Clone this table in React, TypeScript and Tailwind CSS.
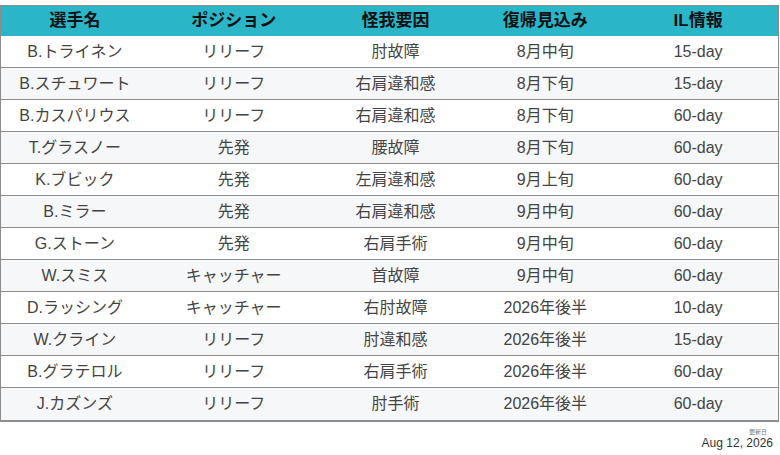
const rows = [
  ["B.トライネン", "リリーフ", "肘故障", "8月中旬", "15-day"],
  ["B.スチュワート", "リリーフ", "右肩違和感", "8月下旬", "15-day"],
  ["B.カスパリウス", "リリーフ", "右肩違和感", "8月下旬", "60-day"],
  ["T.グラスノー", "先発", "腰故障", "8月下旬", "60-day"],
  ["K.ブビック", "先発", "左肩違和感", "9月上旬", "60-day"],
  ["B.ミラー", "先発", "右肩違和感", "9月中旬", "60-day"],
  ["G.ストーン", "先発", "右肩手術", "9月中旬", "60-day"],
  ["W.スミス", "キャッチャー", "首故障", "9月中旬", "60-day"],
  ["D.ラッシング", "キャッチャー", "右肘故障", "2026年後半", "10-day"],
  ["W.クライン", "リリーフ", "肘違和感", "2026年後半", "15-day"],
  ["B.グラテロル", "リリーフ", "右肩手術", "2026年後半", "60-day"],
  ["J.カズンズ", "リリーフ", "肘手術", "2026年後半", "60-day"],
];

const headers = ["選手名", "ポジション", "怪我要因", "復帰見込み", "IL情報"];
const widths = ["w-[148px]", "w-[170px]", "w-[154px]", "w-[146px]", "w-[160px]"];

const App = () => {
  return (
    <div className="w-[780px] h-[455px] bg-white pt-[5px] font-['Liberation_Sans','Noto_Sans_CJK_JP',sans-serif]">
      <div className="w-[779px] border border-[#8c8c8c] border-b-2">
        <div className="flex h-[30px] bg-[#2bb5c8] items-center">
          {headers.map((h, i) => (
            <div key={h} className={`${widths[i]} text-center text-[17px] font-bold text-[#111]`}>
              {h}
            </div>
          ))}
        </div>
        {rows.map((r, ri) => (
          <div
            key={ri}
            className={`flex h-[32px] items-center border-b border-[#8c8c8c] last:border-b-0 ${
              ri % 2 === 0 ? "bg-white" : "bg-[#f6f7f9]"
            }`}
          >
            {r.map((c, ci) => (
              <div key={ci} className={`${widths[ci]} text-center text-[16px] text-[#444]`}>
                {c}
              </div>
            ))}
          </div>
        ))}
      </div>
      <div className="flex flex-col items-end pr-[7px] pt-[6px]">
        <p className="text-[6px] leading-[8px] text-[#777] pr-[6px]">更新日</p>
        <p className="text-[12px] leading-[15px] text-[#333]">Aug 12, 2026</p>
      </div>
    </div>
  );
};

export default App;
